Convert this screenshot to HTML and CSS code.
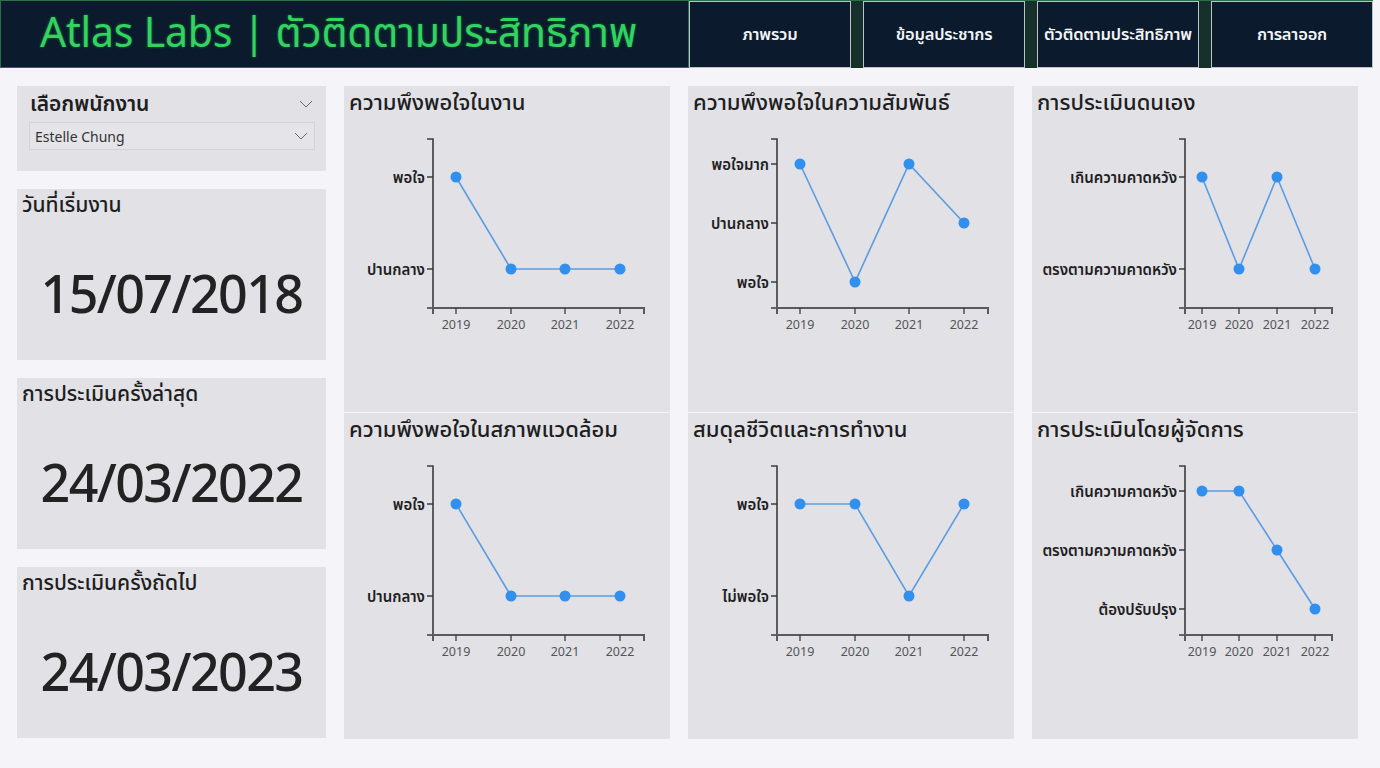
FILE: index.html
```html
<!DOCTYPE html>
<html lang="th">
<head>
<meta charset="utf-8">
<title>Atlas Labs | ตัวติดตามประสิทธิภาพ</title>
<link rel="stylesheet" href="styles.css">
</head>
<body>
<header class="topbar">
  <div class="brand"><h1>Atlas Labs | ตัวติดตามประสิทธิภาพ</h1></div>
  <nav class="nav">
    <a class="nav-btn">ภาพรวม</a>
    <a class="nav-btn">ข้อมูลประชากร</a>
    <a class="nav-btn">ตัวติดตามประสิทธิภาพ</a>
    <a class="nav-btn">การลาออก</a>
  </nav>
</header>
<main class="main">
  <section class="left-col">
    <div class="card select-card">
      <div class="select-head">
        <span class="select-title">เลือกพนักงาน</span>
        <svg class="chev" width="14" height="8" viewBox="0 0 14 8"><path d="M1 1 L7 7 L13 1" fill="none" stroke="#6a6a70" stroke-width="1"/></svg>
      </div>
      <div class="select-box">
        <span>Estelle Chung</span>
        <svg class="chev" width="14" height="8" viewBox="0 0 14 8"><path d="M1 1 L7 7 L13 1" fill="none" stroke="#6a6a70" stroke-width="1"/></svg>
      </div>
    </div>
    <div class="card kpi">
      <div class="kpi-title">วันที่เริ่มงาน</div>
      <div class="kpi-value">15/07/2018</div>
    </div>
    <div class="card kpi">
      <div class="kpi-title">การประเมินครั้งล่าสุด</div>
      <div class="kpi-value">24/03/2022</div>
    </div>
    <div class="card kpi">
      <div class="kpi-title">การประเมินครั้งถัดไป</div>
      <div class="kpi-value">24/03/2023</div>
    </div>
  </section>

  <section class="chart-col">
    <div class="card chart">
      <div class="chart-title">ความพึงพอใจในงาน</div>
      <svg class="plot" width="326" height="296" viewBox="0 30 326 296">
        <path class="domain-y" d="M83 53 H89 V222 H83"/>
        <path class="domain-x" d="M89 228 V222 H300 V228"/>
        <path class="tick" d="M83 91 H89 M83 183 H89 M112 222 V228 M167 222 V228 M221 222 V228 M276 222 V228"/>
        <text class="ylab" x="81" y="91">พอใจ</text>
        <text class="ylab" x="81" y="183">ปานกลาง</text>
        <text class="xlab" x="112" y="238">2019</text><text class="xlab" x="167" y="238">2020</text><text class="xlab" x="221" y="238">2021</text><text class="xlab" x="276" y="238">2022</text>
        <polyline class="line" points="112,91 167,183 221,183 276,183"/>
        <circle class="dot" cx="112" cy="91" r="5.5"/><circle class="dot" cx="167" cy="183" r="5.5"/><circle class="dot" cx="221" cy="183" r="5.5"/><circle class="dot" cx="276" cy="183" r="5.5"/>
      </svg>
    </div>
    <div class="card chart">
      <div class="chart-title">ความพึงพอใจในสภาพแวดล้อม</div>
      <svg class="plot" width="326" height="296" viewBox="0 30 326 296">
        <path class="domain-y" d="M83 53 H89 V222 H83"/>
        <path class="domain-x" d="M89 228 V222 H300 V228"/>
        <path class="tick" d="M83 91 H89 M83 183 H89 M112 222 V228 M167 222 V228 M221 222 V228 M276 222 V228"/>
        <text class="ylab" x="81" y="91">พอใจ</text>
        <text class="ylab" x="81" y="183">ปานกลาง</text>
        <text class="xlab" x="112" y="238">2019</text><text class="xlab" x="167" y="238">2020</text><text class="xlab" x="221" y="238">2021</text><text class="xlab" x="276" y="238">2022</text>
        <polyline class="line" points="112,91 167,183 221,183 276,183"/>
        <circle class="dot" cx="112" cy="91" r="5.5"/><circle class="dot" cx="167" cy="183" r="5.5"/><circle class="dot" cx="221" cy="183" r="5.5"/><circle class="dot" cx="276" cy="183" r="5.5"/>
      </svg>
    </div>
  </section>

  <section class="chart-col">
    <div class="card chart">
      <div class="chart-title">ความพึงพอใจในความสัมพันธ์</div>
      <svg class="plot" width="326" height="296" viewBox="0 30 326 296">
        <path class="domain-y" d="M83 53 H89 V222 H83"/>
        <path class="domain-x" d="M89 228 V222 H300 V228"/>
        <path class="tick" d="M83 78 H89 M83 137 H89 M83 196 H89 M112 222 V228 M167 222 V228 M221 222 V228 M276 222 V228"/>
        <text class="ylab" x="81" y="78">พอใจมาก</text>
        <text class="ylab" x="81" y="137">ปานกลาง</text>
        <text class="ylab" x="81" y="196">พอใจ</text>
        <text class="xlab" x="112" y="238">2019</text><text class="xlab" x="167" y="238">2020</text><text class="xlab" x="221" y="238">2021</text><text class="xlab" x="276" y="238">2022</text>
        <polyline class="line" points="112,78 167,196 221,78 276,137"/>
        <circle class="dot" cx="112" cy="78" r="5.5"/><circle class="dot" cx="167" cy="196" r="5.5"/><circle class="dot" cx="221" cy="78" r="5.5"/><circle class="dot" cx="276" cy="137" r="5.5"/>
      </svg>
    </div>
    <div class="card chart">
      <div class="chart-title">สมดุลชีวิตและการทำงาน</div>
      <svg class="plot" width="326" height="296" viewBox="0 30 326 296">
        <path class="domain-y" d="M83 53 H89 V222 H83"/>
        <path class="domain-x" d="M89 228 V222 H300 V228"/>
        <path class="tick" d="M83 91 H89 M83 183 H89 M112 222 V228 M167 222 V228 M221 222 V228 M276 222 V228"/>
        <text class="ylab" x="81" y="91">พอใจ</text>
        <text class="ylab" x="81" y="183">ไม่พอใจ</text>
        <text class="xlab" x="112" y="238">2019</text><text class="xlab" x="167" y="238">2020</text><text class="xlab" x="221" y="238">2021</text><text class="xlab" x="276" y="238">2022</text>
        <polyline class="line" points="112,91 167,91 221,183 276,91"/>
        <circle class="dot" cx="112" cy="91" r="5.5"/><circle class="dot" cx="167" cy="91" r="5.5"/><circle class="dot" cx="221" cy="183" r="5.5"/><circle class="dot" cx="276" cy="91" r="5.5"/>
      </svg>
    </div>
  </section>

  <section class="chart-col">
    <div class="card chart">
      <div class="chart-title">การประเมินดนเอง</div>
      <svg class="plot" width="326" height="296" viewBox="0 30 326 296">
        <path class="domain-y" d="M147 53 H153 V222 H147"/>
        <path class="domain-x" d="M153 228 V222 H300 V228"/>
        <path class="tick" d="M147 91 H153 M147 183 H153 M170 222 V228 M207 222 V228 M245 222 V228 M283 222 V228"/>
        <text class="ylab" x="145" y="91">เกินความคาดหวัง</text>
        <text class="ylab" x="145" y="183">ตรงตามความคาดหวัง</text>
        <text class="xlab" x="170" y="238">2019</text><text class="xlab" x="207" y="238">2020</text><text class="xlab" x="245" y="238">2021</text><text class="xlab" x="283" y="238">2022</text>
        <polyline class="line" points="170,91 207,183 245,91 283,183"/>
        <circle class="dot" cx="170" cy="91" r="5.5"/><circle class="dot" cx="207" cy="183" r="5.5"/><circle class="dot" cx="245" cy="91" r="5.5"/><circle class="dot" cx="283" cy="183" r="5.5"/>
      </svg>
    </div>
    <div class="card chart">
      <div class="chart-title">การประเมินโดยผู้จัดการ</div>
      <svg class="plot" width="326" height="296" viewBox="0 30 326 296">
        <path class="domain-y" d="M147 53 H153 V222 H147"/>
        <path class="domain-x" d="M153 228 V222 H300 V228"/>
        <path class="tick" d="M147 78 H153 M147 137 H153 M147 196 H153 M170 222 V228 M207 222 V228 M245 222 V228 M283 222 V228"/>
        <text class="ylab" x="145" y="78">เกินความคาดหวัง</text>
        <text class="ylab" x="145" y="137">ตรงตามความคาดหวัง</text>
        <text class="ylab" x="145" y="196">ต้องปรับปรุง</text>
        <text class="xlab" x="170" y="238">2019</text><text class="xlab" x="207" y="238">2020</text><text class="xlab" x="245" y="238">2021</text><text class="xlab" x="283" y="238">2022</text>
        <polyline class="line" points="170,78 207,78 245,137 283,196"/>
        <circle class="dot" cx="170" cy="78" r="5.5"/><circle class="dot" cx="207" cy="78" r="5.5"/><circle class="dot" cx="245" cy="137" r="5.5"/><circle class="dot" cx="283" cy="196" r="5.5"/>
      </svg>
    </div>
  </section>
</main>
</body>
</html>
```

FILE: styles.css
```css
* { box-sizing: border-box; }
html, body { margin: 0; padding: 0; }
body {
  width: 1380px;
  height: 768px;
  overflow: hidden;
  background: #f4f4f9;
  font-family: "Noto Sans", "Noto Sans Thai", "Open Sans", sans-serif;
  color: #222;
}

/* ---------- header ---------- */
.topbar {
  display: flex;
  height: 68px;
  width: 1373px;
  background: #16302b;
}
.brand {
  width: 689px;
  height: 68px;
  background: #0b1a2c;
  border: 1px solid #2b6f48;
  display: flex;
  align-items: center;
  padding-left: 39px;
}
.brand h1 {
  margin: 0;
  font-size: 41px;
  font-weight: 400;
  color: #32d35e;
  letter-spacing: -0.2px;
  text-shadow: 0 0 3px rgba(40, 210, 90, 0.45);
  white-space: nowrap;
}
.nav {
  display: flex;
  gap: 12px;
  border-top: 1px solid #2b6f48;
}
.nav-btn {
  width: 162px;
  height: 67px;
  background: #0b1a2c;
  border: 1px solid #b9c3c6;
  display: flex;
  align-items: center;
  justify-content: center;
  color: #f2f4f6;
  font-size: 16.5px;
  font-weight: 600;
  white-space: nowrap;
  letter-spacing: -0.2px;
}

/* ---------- main grid ---------- */
.main {
  display: grid;
  grid-template-columns: 309px 326px 326px 326px;
  column-gap: 18px;
  padding: 18px 0 0 17px;
}
.card { background: #e1e1e6; }

.left-col {
  display: flex;
  flex-direction: column;
  gap: 18px;
}
.select-card {
  height: 85px;
  padding: 0 11px 0 12px;
}
.select-head {
  height: 34px;
  display: flex;
  align-items: center;
  justify-content: space-between;
  padding: 2px 2px 0 1px;
}
.select-title {
  font-size: 21px;
  font-weight: 600;
  color: #1e1e1e;
}
.select-box {
  height: 28px;
  margin-top: 2px;
  border: 1px solid #d3d3d9;
  background: #e4e4e9;
  display: flex;
  align-items: center;
  justify-content: space-between;
  padding: 0 6px 0 5px;
  font-size: 14px;
  color: #333;
}
.chev { display: block; }

.kpi {
  height: 171px;
  display: flex;
  flex-direction: column;
}
.kpi-title {
  height: 30px;
  line-height: 30px;
  padding-left: 5px;
  font-size: 21px;
  font-weight: 500;
  color: #1e1e1e;
}
.kpi-value {
  flex: 1;
  display: flex;
  align-items: center;
  justify-content: center;
  padding: 5px 0 0 0;
  font-size: 52px;
  font-weight: 500;
  color: #222;
  letter-spacing: -1.6px;
}

/* ---------- charts ---------- */
.chart-col {
  display: grid;
  grid-template-rows: 326px 326px;
  row-gap: 1px;
}
.chart {
  display: flex;
  flex-direction: column;
}
.chart-title {
  height: 30px;
  line-height: 30px;
  padding-left: 5px;
  font-size: 22px;
  font-weight: 500;
  color: #1e1e1e;
  white-space: nowrap;
}
.plot { display: block; overflow: visible; }
.domain-y { fill: none; stroke: #3c3c3c; stroke-width: 1.6; }
.domain-x { fill: none; stroke: #5a5a5a; stroke-width: 2; }
.tick { fill: none; stroke: #3c3c3c; stroke-width: 1.3; }
.ylab {
  font-size: 15px;
  font-weight: 600;
  fill: #202020;
  text-anchor: end;
  dominant-baseline: central;
}
.xlab {
  font-size: 12.5px;
  fill: #555;
  text-anchor: middle;
  dominant-baseline: central;
}
.line { fill: none; stroke: #5c9ce0; stroke-width: 1.6; }
.dot { fill: #3190ee; }
```
